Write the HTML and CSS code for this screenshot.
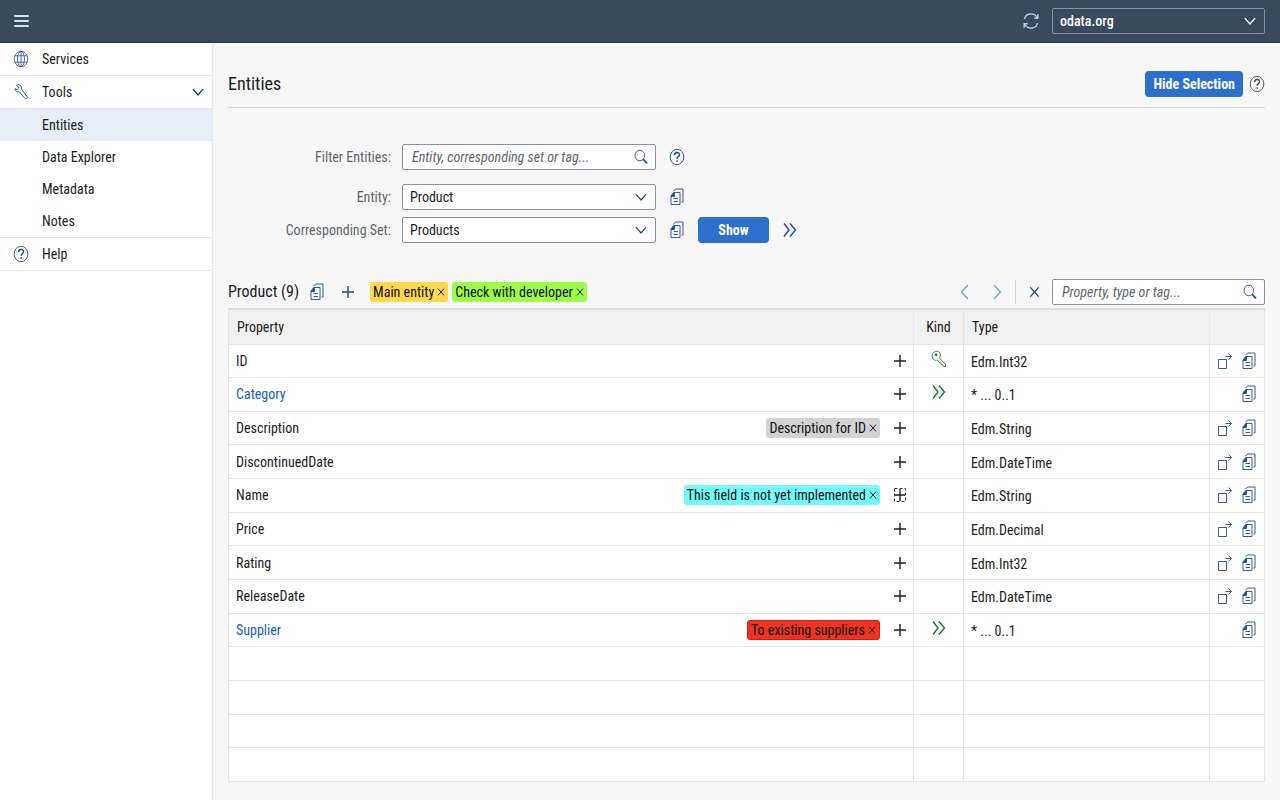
FILE: index.html
```
<!DOCTYPE html>
<html lang="en">
<head>
<meta charset="utf-8">
<meta name="viewport" content="width=device-width, initial-scale=1">
<title>Entities</title>
<link rel="stylesheet" href="styles.css">
</head>
<body>
<svg class="sprite" aria-hidden="true">
  <symbol id="copy" viewBox="0 0 16 18"><path d="M4.500 4.500h6.500v12h-9v-8.500z M4.500 3.200l2-2.200h7.500v13h-1.500" /><path d="M2 8.500l3.500-4v4z" fill="currentColor"/><path d="M4.500 10.500h4.500M4.500 13.500h4.500"/></symbol>
  <symbol id="help" viewBox="0 0 16 18"><ellipse cx="8" cy="9" rx="6.800" ry="7.700"/><path class="bold" d="M5.700 7c0-3.300 4.800-3.200 4.800-.3 0 2-2.400 1.900-2.400 4.100M8.100 12.300v1.400"/></symbol>
  <symbol id="chevron" viewBox="0 0 14 14"><path class="mid" d="M2.500 4.500L7 9.500l4.500-5"/></symbol>
  <symbol id="left" viewBox="0 0 14 16"><path class="bold" d="M9.500 2L4 8l5.500 6"/></symbol>
  <symbol id="right" viewBox="0 0 14 16"><path class="bold" d="M4.500 2L10 8l-5.500 6"/></symbol>
  <symbol id="double" viewBox="0 0 16 18"><path class="bold" d="M2 2.500l5 6.500-5 6.500M8 2.500l5.500 6.500-5.500 6.500"/></symbol>
  <symbol id="plus" viewBox="0 0 14 14"><path class="bold" d="M7 1v12M1 7h12"/></symbol>
  <symbol id="cross" viewBox="0 0 12 12"><path class="bold" d="M1.500 1l9 10M10.500 1l-9 10"/></symbol>
  <symbol id="search" viewBox="0 0 16 16"><ellipse cx="6.800" cy="6.500" rx="4.800" ry="5.300"/><path class="thick" d="M10.200 10.400l3.800 4"/></symbol>
  <symbol id="globe" viewBox="0 0 16 18"><g class="fine"><ellipse cx="8" cy="9" rx="6.800" ry="7.700"/><ellipse cx="8" cy="9" rx="3.500" ry="7.700"/><path d="M1.800 5.800h12.400M1.800 12.200h12.400M8 1.200v15.600"/></g></symbol>
  <symbol id="wrench" viewBox="0 0 16 18"><path d="M3.500 2c2.600-1.300 5.500.6 5 4.300l5.600 7.200c.7 1.300-.9 3-2.100 2L6.400 8.700C4.300 9.600 2.200 8.300 2 5.600l2.500 1.200 1.300-2.300z"/></symbol>
  <symbol id="key" viewBox="0 0 16 18"><path d="M8.500 8L14.500 14.300v2.200h-2.300l-.3-1.700-1.700-.2-.2-1.700-1.700-.3-2-2.600C3.500 11 1.300 9 1.300 5.800c0-5.800 8-6 8.200-.8z"/><circle cx="5" cy="4.800" r="1" fill="currentColor"/></symbol>
  <symbol id="jump" viewBox="0 0 16 18"><path d="M1.500 7.500h8v9h-8zM8.500 4.500h6M11.500 1.500l3.200 3-3.200 3"/></symbol>
  <symbol id="refresh" viewBox="0 0 16 18"><path class="bold" d="M1.500 7C2.500 1 11 0 14 5.500M14.500 11C13.500 17 5 18 2 12.500M14.800 2.300v3.900h-3.500M1.200 15.700v-3.900h3.500"/></symbol>
  <symbol id="plusfocus" viewBox="0 0 14 16"><path class="bold" d="M7 2v12M2 8h10"/><path class="dash" d="M1.500 1.500h11v13h-11z"/></symbol>
</svg>

<header class="topbar">
  <button class="menu" type="button" aria-label="Menu"><span></span><span></span><span></span></button>
  <div class="topbar-right">
    <button class="icon-btn" type="button" aria-label="Refresh"><svg class="icon"><use href="#refresh"/></svg></button>
    <div class="select service">
      <select aria-label="Service"><option>odata.org</option></select>
      <svg class="icon arrow"><use href="#chevron"/></svg>
    </div>
  </div>
</header>

<div class="layout">
  <nav class="sidebar">
    <a class="nav-item line" href="#"><svg class="icon"><use href="#globe"/></svg>Services</a>
    <a class="nav-item line" href="#"><svg class="icon"><use href="#wrench"/></svg>Tools<svg class="icon end"><use href="#chevron"/></svg></a>
    <a class="nav-item sub active" href="#">Entities</a>
    <a class="nav-item sub" href="#">Data Explorer</a>
    <a class="nav-item sub" href="#">Metadata</a>
    <a class="nav-item sub line" href="#">Notes</a>
    <a class="nav-item line" href="#"><svg class="icon"><use href="#help"/></svg>Help</a>
  </nav>

  <main class="content">
    <div class="page-head">
      <h1>Entities</h1>
      <button class="primary" type="button">Hide Selection</button>
      <button class="icon-btn grey" type="button" aria-label="Help"><svg class="icon"><use href="#help"/></svg></button>
    </div>

    <form class="selection">
      <div class="form-row spaced">
        <label for="filter">Filter Entities:</label>
        <div class="search">
          <input id="filter" type="text" placeholder="Entity, corresponding set or tag...">
          <button type="button" aria-label="Search"><svg class="icon"><use href="#search"/></svg></button>
        </div>
        <button class="icon-btn" type="button" aria-label="Filter help"><svg class="icon"><use href="#help"/></svg></button>
      </div>
      <div class="form-row">
        <label for="entity">Entity:</label>
        <div class="select">
          <select id="entity"><option>Product</option></select>
          <svg class="icon arrow"><use href="#chevron"/></svg>
        </div>
        <button class="icon-btn" type="button" aria-label="Copy entity"><svg class="icon"><use href="#copy"/></svg></button>
      </div>
      <div class="form-row">
        <label for="set">Corresponding Set:</label>
        <div class="select">
          <select id="set"><option>Products</option></select>
          <svg class="icon arrow"><use href="#chevron"/></svg>
        </div>
        <button class="icon-btn" type="button" aria-label="Copy set"><svg class="icon"><use href="#copy"/></svg></button>
        <button class="primary show" type="button">Show</button>
        <button class="icon-btn" type="button" aria-label="More"><svg class="icon"><use href="#double"/></svg></button>
      </div>
    </form>

    <div class="toolbar">
      <h2>Product (9)</h2>
      <button class="icon-btn" type="button" aria-label="Copy"><svg class="icon"><use href="#copy"/></svg></button>
      <button class="icon-btn add" type="button" aria-label="Add tag"><svg class="icon"><use href="#plus"/></svg></button>
      <div class="tags">
        <span class="tag yellow">Main entity<button type="button" aria-label="Remove"><svg><use href="#cross"/></svg></button></span>
        <span class="tag green">Check with developer<button type="button" aria-label="Remove"><svg><use href="#cross"/></svg></button></span>
      </div>
      <div class="tools">
        <button class="icon-btn faded" type="button" aria-label="Previous"><svg class="icon"><use href="#left"/></svg></button>
        <button class="icon-btn faded" type="button" aria-label="Next"><svg class="icon"><use href="#right"/></svg></button>
        <span class="divider"></span>
        <button class="icon-btn clear" type="button" aria-label="Clear"><svg class="icon"><use href="#cross"/></svg></button>
        <div class="search">
          <input type="text" aria-label="Search properties" placeholder="Property, type or tag...">
          <button type="button" aria-label="Search"><svg class="icon"><use href="#search"/></svg></button>
        </div>
      </div>
    </div>

    <div class="table-wrap">
    <table>
      <colgroup><col><col class="c-kind"><col class="c-type"><col class="c-act"></colgroup>
      <thead><tr><th>Property</th><th class="kind">Kind</th><th>Type</th><th></th></tr></thead>
      <tbody>
        <tr>
          <td><div class="prop"><span>ID</span><button type="button" aria-label="Add tag"><svg><use href="#plus"/></svg></button></div></td>
          <td class="kind"><svg class="icon"><use href="#key"/></svg></td><td class="type">Edm.Int32</td>
          <td><div class="acts"><button type="button" aria-label="Open"><svg class="icon"><use href="#jump"/></svg></button><button type="button" aria-label="Copy"><svg class="icon"><use href="#copy"/></svg></button></div></td>
        </tr>
        <tr>
          <td><div class="prop"><a href="#">Category</a><button type="button" aria-label="Add tag"><svg><use href="#plus"/></svg></button></div></td>
          <td class="kind"><svg class="icon"><use href="#double"/></svg></td><td class="type">* ... 0..1</td>
          <td><div class="acts"><button type="button" aria-label="Copy"><svg class="icon"><use href="#copy"/></svg></button></div></td>
        </tr>
        <tr>
          <td><div class="prop"><span>Description</span><span class="tag grey">Description for ID<button type="button" aria-label="Remove"><svg><use href="#cross"/></svg></button></span><button type="button" aria-label="Add tag"><svg><use href="#plus"/></svg></button></div></td>
          <td></td><td class="type">Edm.String</td>
          <td><div class="acts"><button type="button" aria-label="Open"><svg class="icon"><use href="#jump"/></svg></button><button type="button" aria-label="Copy"><svg class="icon"><use href="#copy"/></svg></button></div></td>
        </tr>
        <tr>
          <td><div class="prop"><span>DiscontinuedDate</span><button type="button" aria-label="Add tag"><svg><use href="#plus"/></svg></button></div></td>
          <td></td><td class="type">Edm.DateTime</td>
          <td><div class="acts"><button type="button" aria-label="Open"><svg class="icon"><use href="#jump"/></svg></button><button type="button" aria-label="Copy"><svg class="icon"><use href="#copy"/></svg></button></div></td>
        </tr>
        <tr>
          <td><div class="prop"><span>Name</span><span class="tag cyan">This field is not yet implemented<button type="button" aria-label="Remove"><svg><use href="#cross"/></svg></button></span><button type="button" aria-label="Add tag"><svg class="focused"><use href="#plusfocus"/></svg></button></div></td>
          <td></td><td class="type">Edm.String</td>
          <td><div class="acts"><button type="button" aria-label="Open"><svg class="icon"><use href="#jump"/></svg></button><button type="button" aria-label="Copy"><svg class="icon"><use href="#copy"/></svg></button></div></td>
        </tr>
        <tr>
          <td><div class="prop"><span>Price</span><button type="button" aria-label="Add tag"><svg><use href="#plus"/></svg></button></div></td>
          <td></td><td class="type">Edm.Decimal</td>
          <td><div class="acts"><button type="button" aria-label="Open"><svg class="icon"><use href="#jump"/></svg></button><button type="button" aria-label="Copy"><svg class="icon"><use href="#copy"/></svg></button></div></td>
        </tr>
        <tr>
          <td><div class="prop"><span>Rating</span><button type="button" aria-label="Add tag"><svg><use href="#plus"/></svg></button></div></td>
          <td></td><td class="type">Edm.Int32</td>
          <td><div class="acts"><button type="button" aria-label="Open"><svg class="icon"><use href="#jump"/></svg></button><button type="button" aria-label="Copy"><svg class="icon"><use href="#copy"/></svg></button></div></td>
        </tr>
        <tr>
          <td><div class="prop"><span>ReleaseDate</span><button type="button" aria-label="Add tag"><svg><use href="#plus"/></svg></button></div></td>
          <td></td><td class="type">Edm.DateTime</td>
          <td><div class="acts"><button type="button" aria-label="Open"><svg class="icon"><use href="#jump"/></svg></button><button type="button" aria-label="Copy"><svg class="icon"><use href="#copy"/></svg></button></div></td>
        </tr>
        <tr>
          <td><div class="prop"><a href="#">Supplier</a><span class="tag red">To existing suppliers<button type="button" aria-label="Remove"><svg><use href="#cross"/></svg></button></span><button type="button" aria-label="Add tag"><svg><use href="#plus"/></svg></button></div></td>
          <td class="kind"><svg class="icon"><use href="#double"/></svg></td><td class="type">* ... 0..1</td>
          <td><div class="acts"><button type="button" aria-label="Copy"><svg class="icon"><use href="#copy"/></svg></button></div></td>
        </tr>
        <tr><td></td><td></td><td></td><td></td></tr>
        <tr><td></td><td></td><td></td><td></td></tr>
        <tr><td></td><td></td><td></td><td></td></tr>
        <tr><td></td><td></td><td></td><td></td></tr>
      </tbody>
    </table>
    </div>
  </main>
</div>
</body>
</html>
```

FILE: styles.css
```
* { box-sizing: border-box; }

body {
  margin: 0;
  min-height: 100vh;
  display: flex;
  flex-direction: column;
  background: #f7f7f7;
  color: #1b1e22;
  font: 14px/20px "Roboto Condensed", Roboto, "Liberation Sans", sans-serif;
}

.sprite { position: absolute; width: 0; height: 0; }
svg { display: block; fill: none; stroke: currentColor; stroke-width: 0.9px; }
.fine { stroke-width: 0.8px; }
.mid { stroke-width: 1.2px; }
.bold { stroke-width: 1.4px; }
.thick { stroke-width: 1.7px; }
.dash { stroke-dasharray: 3 2; }
.icon { width: 16px; height: 18px; flex: none; }

button, input, select { font: inherit; color: inherit; margin: 0; }
button { border: 0; padding: 0; background: none; cursor: pointer; }
a { text-decoration: none; color: inherit; }

/* Top bar */
.topbar {
  height: 43px;
  flex: none;
  display: flex;
  align-items: center;
  justify-content: space-between;
  padding: 0 15px 0 14px;
  background: #3a4a5c;
  border-bottom: 1px solid #1c3355;
  color: #fff;
}
.menu { display: flex; flex-direction: column; gap: 3px; }
.menu span { width: 15px; height: 2px; border-radius: 1px; background: #d3e2f3; }
.topbar-right { display: flex; align-items: center; gap: 13px; }
.topbar-right .icon-btn { color: #b7cde6; }

.icon-btn {
  width: 16px;
  height: 26px;
  display: flex;
  align-items: center;
  justify-content: center;
  color: #1c4ba0;
}
.icon-btn.grey { color: #4b4e52; }

.select, .search {
  height: 26px;
  border: 1px solid #8b929a;
  border-radius: 2px;
  background: #fff;
}
.select { position: relative; }
.select select {
  width: 100%;
  height: 100%;
  appearance: none;
  border: 0;
  padding: 0 32px 0 7px;
  background: transparent;
}
.arrow {
  position: absolute;
  top: 3px;
  right: 6px;
  pointer-events: none;
  color: #1c4ba0;
}
.service {
  width: 213px;
  border-color: #7e93ac;
  background: transparent;
  font-weight: 500;
}
.service .arrow { color: #fff; }

.search { display: flex; align-items: center; padding: 0 6px 0 9px; }
.search input {
  flex: 1;
  min-width: 0;
  border: 0;
  outline: 0;
  padding: 0;
  background: none;
}
.search input::placeholder { color: #62666b; font-style: italic; opacity: 1; }
.search button { color: #1c4ba0; }

/* Navigation */
.layout { flex: 1; display: flex; }
.sidebar {
  width: 213px;
  flex: none;
  background: #fff;
  border-right: 1px solid #ececec;
}
.nav-item {
  min-height: 32px;
  display: flex;
  align-items: center;
  gap: 13px;
  padding: 0 6px 0 13px;
}
.nav-item.line { border-bottom: 1px solid #e6e6e6; min-height: 33px; }
.nav-item .icon { color: #1c4ba0; }
.nav-item .end { margin-left: auto; color: #0f2f9b; }
.nav-item.sub { padding-left: 42px; }
.nav-item.active { background: #e6eef8; }

/* Main */
.content {
  flex: 1;
  min-width: 0;
  display: flex;
  flex-direction: column;
  padding: 18px 15px 18px 15px;
}
h1, h2 { margin: 0; font-weight: 400; }
h1 { font-size: 18px; line-height: 24px; margin-right: auto; }
.page-head {
  display: flex;
  align-items: center;
  gap: 6px;
  height: 47px;
  border-bottom: 1px solid #d9d9d9;
}
.primary {
  height: 26px;
  padding: 0 8px;
  border-radius: 4px;
  background: #2d6fcd;
  color: #fff;
  font-weight: 700;
}
.primary.show { width: 71px; }

.selection {
  display: flex;
  flex-direction: column;
  gap: 7px;
  padding: 36px 0;
}
.form-row { display: flex; align-items: center; gap: 13px; }
.form-row.spaced { margin-bottom: 7px; }
.form-row label { width: 163px; margin-right: -2px; text-align: right; color: #62666b; }
.form-row .select, .form-row .search { width: 254px; }
.form-row .icon-btn { color: #1c4ba0; }

.toolbar { display: flex; align-items: center; height: 26px; margin-bottom: 3px; }
h2 { font-size: 16px; line-height: 20px; margin-right: 10px; }
.toolbar .add { margin: 0 14px 0 15px; }
.add .icon { width: 14px; height: 14px; }
.tags { display: flex; gap: 4px; }
.tools { display: flex; align-items: center; margin-left: auto; gap: 16px; }
.tools .search { width: 213px; margin-left: -6px; }
.faded { color: #85a4d4; }
.divider { width: 1px; height: 24px; margin: 0 -6px; background: #d4d4d4; }
.tools .clear { color: #0f3a96; }
.clear .icon { width: 11px; height: 12px; }

.tag {
  height: 20px;
  display: flex;
  align-items: center;
  gap: 3px;
  padding: 0 3px;
  border-radius: 3px;
  color: #101010;
}
.tag svg { width: 8px; height: 10px; }
.yellow { background: #ffd84c; }
.green { background: #9efc48; }
.grey.tag { background: #d3d3d3; }
.cyan { background: #73fbfd; }
.red { background: #eb3424; border: 1px solid #f50f0a; }

/* Property table */
.table-wrap { flex: 1; display: grid; }
table {
  width: 100%;
  height: 100%;
  table-layout: fixed;
  border-collapse: collapse;
  background: #fff;
  border: 1px solid #e2e2e2;
  border-top: 2px solid #dedede;
}
.c-kind { width: 50px; }
.c-type { width: 246px; }
.c-act { width: 55px; }
th, td { padding: 0 8px; border: 1px solid #e6e6e6; text-align: left; }
th { height: 35px; background: #f1f1f1; font-weight: 400; border-top: 0; }
td { height: 33px; padding: 0 7px; }
.kind { text-align: center; }
.kind svg { margin: 0 auto 4px; color: #197a2b; }
.type { padding-top: 2px; }
.prop { display: flex; align-items: center; gap: 13px; }
.prop > :first-child { margin-right: auto; }
.prop a { color: #1460c4; }
.prop > button { margin-right: -1px; }
.prop > button svg { width: 14px; height: 14px; }
.prop > button .focused { height: 16px; }
.acts { display: flex; justify-content: flex-end; gap: 8px; color: #1c4ba0; }
```
